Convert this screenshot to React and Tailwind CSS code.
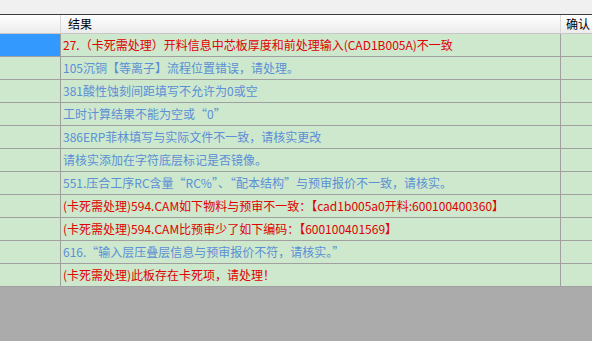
import React from 'react';

const rows = [
  { text: '27.（卡死需处理）开料信息中芯板厚度和前处理输入(CAD1B005A)不一致', red: true, selected: true },
  { text: '105沉铜【等离子】流程位置错误，请处理。' },
  { text: '381酸性蚀刻间距填写不允许为0或空' },
  { text: '工时计算结果不能为空或“0”' },
  { text: '386ERP菲林填写与实际文件不一致，请核实更改' },
  { text: '请核实添加在字符底层标记是否镜像。' },
  { text: '551.压合工序RC含量“RC%”、“配本结构”与预审报价不一致，请核实。' },
  { text: '(卡死需处理)594.CAM如下物料与预审不一致：【cad1b005a0开料:600100400360】', red: true },
  { text: '(卡死需处理)594.CAM比预审少了如下编码：【600100401569】', red: true },
  { text: '616.“输入层压叠层信息与预审报价不符，请核实。”' },
  { text: '(卡死需处理)此板存在卡死项，请处理！', red: true },
];

const App = () => {
  return (
    <div
      className="w-[592px] h-[341px] bg-[#ababab] overflow-hidden text-[12px] leading-none"
      style={{ fontFamily: '"Noto Sans CJK SC", "Noto Sans", sans-serif' }}
    >
      {/* top strip */}
      <div className="h-[15px] bg-[#f0f0f0] border-b border-[#3c3c3c]" />

      {/* header */}
      <div className="flex h-[19px] bg-gradient-to-b from-white to-[#ececec] border-b border-[#c8c8c8] text-black">
        <div className="w-[61px] border-r border-[#d8d8d8]" />
        <div className="w-[500px] border-r border-[#d8d8d8] pl-[7px] flex items-center">结果</div>
        <div className="flex-1 pl-[5px] flex items-center">确认</div>
      </div>

      {/* rows */}
      {rows.map((r, i) => (
        <div key={i} className="flex h-[23px] bg-[#cde8cd] border-b border-[#a0a0a0]">
          <div className={`w-[61px] border-r border-[#a0a0a0] ${r.selected ? 'bg-[#3399ff]' : ''}`} />
          <div
            className={`w-[500px] border-r border-[#a0a0a0] pl-[2px] flex items-center whitespace-nowrap overflow-hidden ${
              r.red ? 'text-[#e00000]' : 'text-[#5b8fd6]'
            }`}
          >
            {r.text}
          </div>
          <div className="flex-1" />
        </div>
      ))}
    </div>
  );
};

export default App;
